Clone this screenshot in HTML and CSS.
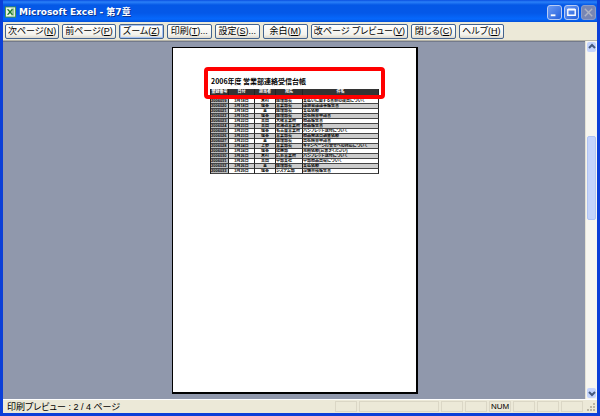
FILE: index.html
```html
<!DOCTYPE html>
<html lang="ja">
<head>
    <meta charset="UTF-8">
    <meta name="viewport" content="width=device-width, initial-scale=1.0">
    <title>Microsoft Excel - 第7章</title>
    <link rel="stylesheet" href="styles.css">
</head>
<body>

    <div class="window">
        <header class="title-bar">
            <svg class="app-icon" viewBox="0 0 12 12" aria-hidden="true">
                <rect x="0" y="0" width="12" height="12" fill="#3f9447"/>
                <rect x="1" y="1" width="10" height="10" fill="#eef5e6"/>
                <rect x="7" y="2" width="3" height="8" fill="#9cc59a"/>
                <path d="M2 3h2l1.500 2L7 3h2L6.500 6L9 9H7L5.500 7L4 9H2l2.500-3z" fill="#1c7a2c"/>
            </svg>
            <h1>Microsoft Excel - 第7章</h1>
            <div class="window-buttons">
                <button aria-label="最小化">
                    <svg viewBox="0 0 14 14"><path d="M3 10h5" stroke="#fff" stroke-width="2"/></svg>
                </button>
                <button aria-label="最大化">
                    <svg viewBox="0 0 14 14"><path d="M3 4h8v6h-8z M3 3.500h8" fill="none" stroke="#fff" stroke-width="1.500"/></svg>
                </button>
                <button class="disabled" aria-label="閉じる" disabled>
                    <svg viewBox="0 0 14 14"><path d="M3 3l8 8M11 3l-8 8" stroke="#b0b4c4" stroke-width="1.500"/></svg>
                </button>
            </div>
        </header>

        <nav class="toolbar">
            <button>次ページ(<u>N</u>)</button>
            <button>前ページ(<u>P</u>)</button>
            <button class="focused">ズーム(<u>Z</u>)</button>
            <button>印刷(<u>T</u>)...</button>
            <button>設定(<u>S</u>)...</button>
            <button>余白(<u>M</u>)</button>
            <button>改ページ プレビュー(<u>V</u>)</button>
            <button>閉じる(<u>C</u>)</button>
            <button>ヘルプ(<u>H</u>)</button>
        </nav>

        <main class="preview">
            <div class="desk">
                <article class="paper">
                    <div class="highlight"></div>
                    <h2>2006年度 営業部連絡受信台帳</h2>
                    <table>
                        <thead>
                            <tr><th class="no">登録番号</th><th class="date">日付</th><th class="person">担当者</th><th class="dest">宛先</th><th>件名</th></tr>
                        </thead>
                        <tbody>
                            <tr><td>2006019</td><td>3月18日</td><td>木村</td><td>経理部長</td><td>支払いに関する書類の提出について</td></tr>
                            <tr><td>2006020</td><td>3月18日</td><td>塩谷</td><td>営業部長</td><td>議題会議議事報告書</td></tr>
                            <tr><td>2006021</td><td>3月18日</td><td>金</td><td>経理部長</td><td>支払依頼</td></tr>
                            <tr><td>2006022</td><td>3月19日</td><td>塩谷</td><td>経理部長</td><td>出張精算申請書</td></tr>
                            <tr><td>2006023</td><td>3月22日</td><td>吉田</td><td>大阪営業所</td><td>商品報告書</td></tr>
                            <tr><td>2006024</td><td>3月23日</td><td>吉田</td><td>北海道営業所</td><td>商品報告書</td></tr>
                            <tr><td>2006025</td><td>3月23日</td><td>塩谷</td><td>名古屋営業所</td><td>パンフレット送付について</td></tr>
                            <tr><td>2006026</td><td>3月23日</td><td>塩谷</td><td>営業部長</td><td>商品発送日調整依頼</td></tr>
                            <tr><td>2006027</td><td>3月23日</td><td>金</td><td>経理部長</td><td>出張精算申請書</td></tr>
                            <tr><td>2006028</td><td>3月24日</td><td>上野</td><td>営業部長</td><td>キャンペーン打合せへの対応について</td></tr>
                            <tr><td>2006029</td><td>3月24日</td><td>塩谷</td><td>総務部</td><td>見積依頼(お急ぎください)</td></tr>
                            <tr><td>2006030</td><td>3月26日</td><td>木村</td><td>広島営業所</td><td>パンフレット送付について</td></tr>
                            <tr><td>2006031</td><td>3月26日</td><td>吉田</td><td>中部支社</td><td>中部商品出荷について</td></tr>
                            <tr><td>2006032</td><td>3月26日</td><td>金</td><td>経理部長</td><td>支払依頼</td></tr>
                            <tr><td>2006033</td><td>3月29日</td><td>塩谷</td><td>システム部</td><td>設備点検報告書</td></tr>
                        </tbody>
                    </table>
                </article>
            </div>
            <div class="scrollbar">
                <button aria-label="上へ"><svg viewBox="0 0 8 8"><path d="M1 5l3-3 3 3" fill="none" stroke="#44597e" stroke-width="2"/></svg></button>
                <div class="track"><div class="thumb"></div></div>
                <button aria-label="下へ"><svg viewBox="0 0 8 8"><path d="M1 3l3 3 3-3" fill="none" stroke="#44597e" stroke-width="2"/></svg></button>
            </div>
        </main>

        <footer class="status-bar">
            <span class="status-text">印刷プレビュー : 2 / 4 ページ</span>
            <span class="cell"></span>
            <span class="cell wide"></span>
            <span class="cell"></span>
            <span class="cell"></span>
            <span class="cell">NUM</span>
            <span class="cell"></span>
            <span class="cell"></span>
            <span class="cell"></span>
            <svg class="grip" viewBox="0 0 12 10" aria-hidden="true">
                <path d="M8 1h2v2H8zM5 4h2v2H5zM8 4h2v2H8zM2 7h2v2H2zM5 7h2v2H5zM8 7h2v2H8z" fill="#b8b4a2"/>
            </svg>
        </footer>
    </div>

</body>
</html>
```
FILE: styles.css
```css
:root {
    --frame-blue: #0b3fd8;
    --face: #ece9d8;
    --desk: #9098ac;
    --font-ui: "Liberation Sans", "Noto Sans CJK JP", sans-serif;
}

* {
    box-sizing: border-box;
}

body {
    margin: 0;
    font-family: var(--font-ui);
    font-feature-settings: "palt"; /* proportional kana */
}

button {
    font-family: inherit;
    font-feature-settings: inherit;
    padding: 0;
}

.window {
    display: flex;
    flex-direction: column;
    min-height: 100vh;
    border: 3px solid var(--frame-blue);
    border-top: 0;
    background: var(--face);
}

/* Title bar */
.title-bar {
    display: flex;
    align-items: center;
    height: 22px;
    padding: 2px 1px 0 2px;
    gap: 3px;
    background: linear-gradient(#0a4fe0 0, #2a80f8 2px, #0458e6 5px, #0458e8 13px, #0668fc 19px, #0450d8 22px);
}

.app-icon {
    width: 11px;
    height: 12px;
}

.title-bar h1 {
    flex: 1;
    margin: 0;
    color: #fff;
    font-family: "DejaVu Sans", "Noto Sans CJK JP", sans-serif;
    font-size: 9px;
    line-height: 12px;
    text-shadow: 1px 1px 0 #0a3590;
}

.window-buttons {
    display: flex;
    gap: 2px;
}

.window-buttons button {
    width: 15px;
    height: 15px;
    border: 1px solid #b8ccf4;
    border-radius: 3px;
    background: linear-gradient(135deg, #6b9bf4, #2460dc);
}

.window-buttons svg {
    display: block;
    width: 13px;
    height: 13px;
}

.window-buttons .disabled {
    border-color: #8c9cc8;
    background: #7886b4;
}

/* Toolbar */
.toolbar {
    display: flex;
    align-items: center;
    gap: 3px;
    height: 19px;
    padding: 0 2px;
    border-bottom: 1px solid #b5b3a6;
}

.toolbar button {
    min-width: 45px;
    height: 15px;
    padding: 0 2px;
    border: 1px solid #42638f;
    border-radius: 2px;
    background: linear-gradient(#fff, #f3f2ec 75%, #dcd8cc);
    color: #000;
    font-size: 9px;
    line-height: 12px;
    white-space: nowrap;
}

.toolbar .focused {
    box-shadow: inset 0 0 0 1px #a6c2f2;
}

/* Preview area */
.preview {
    display: flex;
    flex: 1;
}

.desk {
    flex: 1;
    display: flex;
    justify-content: center;
    padding: 5px 0 5px 2px;
    background: var(--desk);
    border-top: 1px solid #737a8b;
}

.paper {
    position: relative;
    width: 246px;
    padding: 28px 37px 0;
    border: 1px solid #000;
    border-right-width: 2px;
    border-bottom-width: 2px;
    background: #fff;
}

.paper h2 {
    margin: 0 0 3px 1px;
    font-family: "Noto Sans CJK JP", sans-serif;
    font-size: 7px;
    font-weight: 700;
    line-height: 10px;
    white-space: nowrap;
}

.highlight {
    position: absolute;
    top: 19px;
    left: 31px;
    right: 31px;
    height: 32px;
    border: 4px solid #f00;
    border-radius: 4px;
}

.paper table {
    width: 100%;
    border-collapse: separate;
    border-spacing: 0;
    border-left: 1px solid #222;
    table-layout: fixed;
    font-size: 4px;
    font-weight: 700;
    line-height: 4px;
}

.paper th,
.paper td {
    height: 5px;
    padding: 0;
    border-right: 1px solid #222;
    border-bottom: 1px solid #444;
    overflow: hidden;
    white-space: nowrap;
    text-align: left;
}

.paper th {
    height: 10px;
    padding-bottom: 3px;
    background: #333;
    color: #fff;
    text-align: center;
}

.paper .no { width: 18px; }
.paper .date { width: 26px; }
.paper .person { width: 21px; }
.paper .dest { width: 27px; }

.paper td:nth-child(1) {
    background: #bbb;
}

.paper td:nth-child(2),
.paper td:nth-child(3) {
    text-align: center;
}

.paper tbody tr:nth-child(even) {
    background: #ccc;
}

/* Scrollbar */
.scrollbar {
    display: flex;
    flex-direction: column;
    width: 12px;
    padding: 1px;
    background: #f7f6f0;
    border-left: 1px solid #e4e2d6;
}

.scrollbar button {
    height: 10px;
    border: 0;
    border-radius: 2px;
    background: #c4d4fc;
}

.scrollbar svg {
    display: block;
    width: 8px;
    height: 8px;
    margin: 0 auto;
}

.track {
    flex: 1;
    display: grid;
    grid-template-rows: 1fr 1fr 2fr;
}

.thumb {
    grid-row: 2;
    border: 1px solid #b0c4f4;
    border-radius: 2px;
    background: #c4d4fc;
}

/* Status bar */
.status-bar {
    display: flex;
    align-items: center;
    gap: 2px;
    height: 14px;
    padding-left: 4px;
    border-top: 1px solid #fff;
    font-size: 9px;
    line-height: 12px;
}

.status-text {
    flex: 1;
}

.cell {
    width: 22px;
    height: 11px;
    border: 1px solid #dbd7c6;
    font-size: 8px;
    line-height: 10px;
    text-align: center;
}

.cell.wide {
    width: 80px;
}

.grip {
    width: 12px;
    height: 10px;
}
```
